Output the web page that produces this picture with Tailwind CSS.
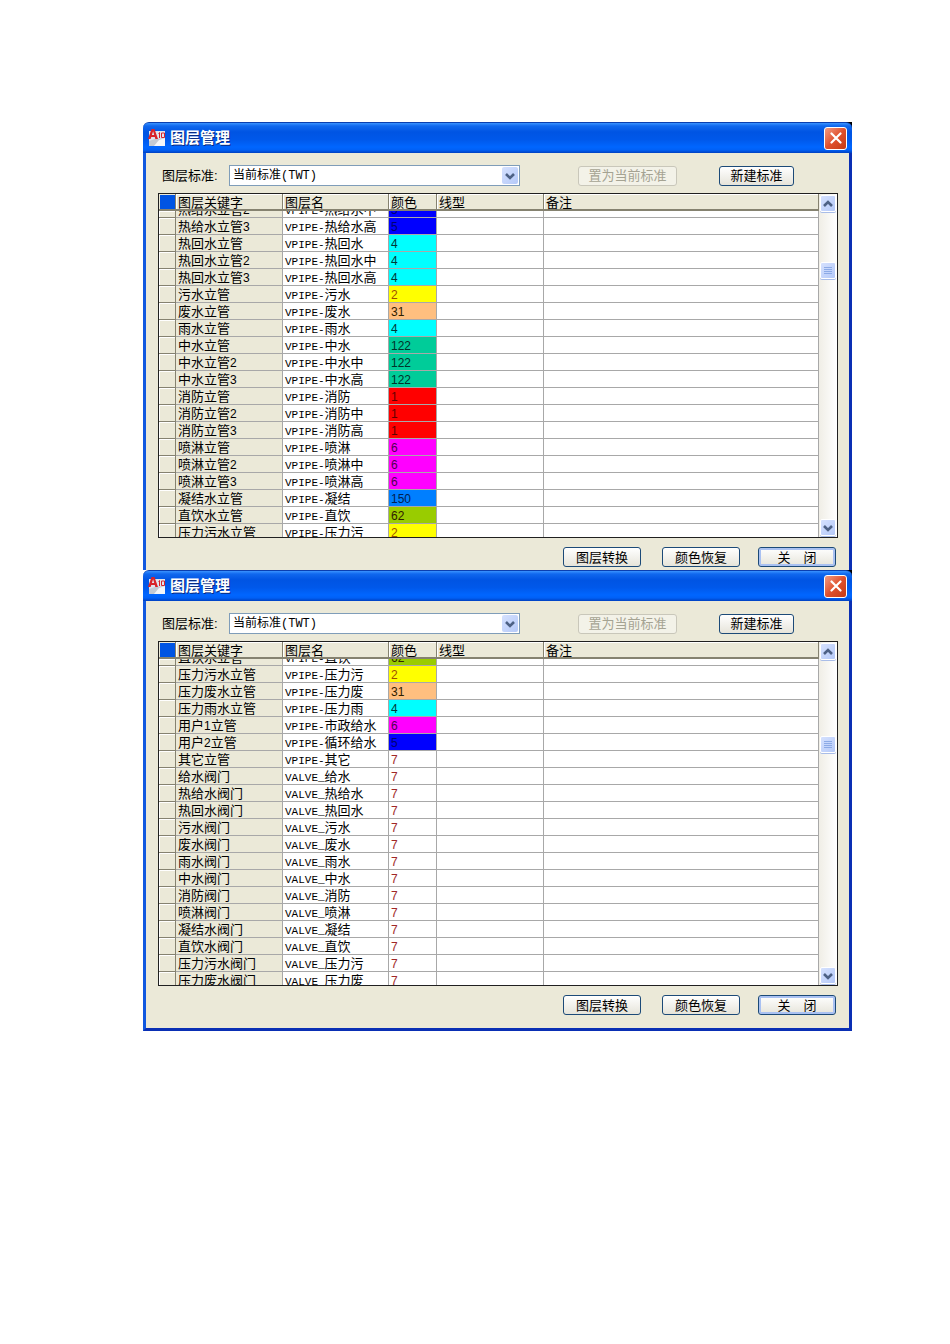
<!DOCTYPE html>
<html lang="zh-CN">
<head>
<meta charset="utf-8">
<title>图层管理</title>
<script src="https://cdn.jsdelivr.net/npm/@tailwindcss/browser@4"></script>
</head>
<body class="bg-white text-black text-[13px] font-['Liberation_Sans','Noto_Sans_CJK_SC',sans-serif]">
<main id="page" class="pt-[122px] pl-[143px] pr-[98px] pb-16"></main>
<script>
const COLORS = { 1: '#ff0000', 2: '#ffff00', 4: '#00ffff', 5: '#0000ff', 6: '#ff00ff', 7: '#ffffff', 31: '#ffbf7f', 62: '#99cc00', 122: '#00cc99', 150: '#007fff' };
const INK = { 2: '#a05000', 5: '#000070', 7: '#a02828', 1: '#600000', 6: '#500050', 122: '#00332a', 150: '#002050', 4: '#003838' };

const dialogs = [
  { id: 'a', thumb: 50, foot: 'pb-[3px]', frame: '', rows: [
    ['热给水立管2', 'VPIPE-热给水中', 5], ['热给水立管3', 'VPIPE-热给水高', 5], ['热回水立管', 'VPIPE-热回水', 4],
    ['热回水立管2', 'VPIPE-热回水中', 4], ['热回水立管3', 'VPIPE-热回水高', 4], ['污水立管', 'VPIPE-污水', 2],
    ['废水立管', 'VPIPE-废水', 31], ['雨水立管', 'VPIPE-雨水', 4], ['中水立管', 'VPIPE-中水', 122],
    ['中水立管2', 'VPIPE-中水中', 122], ['中水立管3', 'VPIPE-中水高', 122], ['消防立管', 'VPIPE-消防', 1],
    ['消防立管2', 'VPIPE-消防中', 1], ['消防立管3', 'VPIPE-消防高', 1], ['喷淋立管', 'VPIPE-喷淋', 6],
    ['喷淋立管2', 'VPIPE-喷淋中', 6], ['喷淋立管3', 'VPIPE-喷淋高', 6], ['凝结水立管', 'VPIPE-凝结', 150],
    ['直饮水立管', 'VPIPE-直饮', 62], ['压力污水立管', 'VPIPE-压力污', 2] ] },
  { id: 'b', thumb: 76, foot: 'pb-[13px]', frame: 'border-b-3 border-b-[#0a2fb4]', rows: [
    ['直饮水立管', 'VPIPE-直饮', 62], ['压力污水立管', 'VPIPE-压力污', 2], ['压力废水立管', 'VPIPE-压力废', 31],
    ['压力雨水立管', 'VPIPE-压力雨', 4], ['用户1立管', 'VPIPE-市政给水', 6], ['用户2立管', 'VPIPE-循环给水', 5],
    ['其它立管', 'VPIPE-其它', 7], ['给水阀门', 'VALVE_给水', 7], ['热给水阀门', 'VALVE_热给水', 7],
    ['热回水阀门', 'VALVE_热回水', 7], ['污水阀门', 'VALVE_污水', 7], ['废水阀门', 'VALVE_废水', 7],
    ['雨水阀门', 'VALVE_雨水', 7], ['中水阀门', 'VALVE_中水', 7], ['消防阀门', 'VALVE_消防', 7],
    ['喷淋阀门', 'VALVE_喷淋', 7], ['凝结水阀门', 'VALVE_凝结', 7], ['直饮水阀门', 'VALVE_直饮', 7],
    ['压力污水阀门', 'VALVE_压力污', 7], ['压力废水阀门', 'VALVE_压力废', 7] ] },
];

// Half-width characters are narrower than the ideographs around them.
const text = s => String(s).replace(/[\x21-\x7e]+/g, m => /^\d+$/.test(m)
  ? `<span class="text-[12px]">${m}</span>`
  : `<span class="font-['Liberation_Mono',monospace] text-[11px]">${m}</span>`);

const chevron = up => `<svg class="size-[10px]" viewBox="0 0 10 10" fill="none" stroke="#4d6185" stroke-width="2.6"><path d="${up ? 'M1 7l4-4 4 4' : 'M1 3l4 4 4-4'}"/></svg>`;

function row([key, name, color], i, all) {
  // The first row shows only its lower part, the last only its upper part.
  const box = i === 0 ? 'h-[6px] flex flex-col justify-end overflow-hidden' : i === all.length - 1 ? 'h-[13px] overflow-hidden' : 'h-[16px]';
  const line = i === all.length - 1 ? '' : 'border-b';
  const cell = s => `<div class="${box}"><div class="h-[16px] shrink-0 leading-[18px] pl-[2px] whitespace-nowrap">${text(s)}</div></div>`;
  return `<tr>
    <td class="${line} border-r border-[#858270] bg-[#ebe9d8] shadow-[inset_1px_1px_0_#ffffff]">${cell('')}</td>
    <th scope="row" class="${line} border-r border-[#a8a8a8] bg-[#ebe9d8] text-left font-normal">${cell(key)}</th>
    <td class="${line} border-r border-[#a8a8a8]">${cell(name)}</td>
    <td class="${line} border-r border-[#a8a8a8]" style="background:${COLORS[color]};color:${INK[color] || '#302000'}">${cell(color)}</td>
    <td class="${line} border-r border-[#a8a8a8]"></td>
    <td class="${line} border-r border-[#a8a8a8]"></td>
  </tr>`;
}

const head = s => `<th scope="col" class="h-[17px] border-r border-b-2 border-[#858270] bg-[#ebe9d8] p-0 text-left font-normal shadow-[inset_1px_1px_0_#ffffff]"><div class="h-[15px] pl-[2px] leading-[18px] whitespace-nowrap">${s}</div></th>`;
const push = s => `<button class="h-[20px] w-[78px] rounded-[3px] border border-[#1c4a78] bg-linear-to-b from-white to-[#e6e4da] leading-[15px] whitespace-pre">${s}</button>`;
const scrollBtn = (label, inner) => `<button aria-label="${label}" class="flex h-[17px] w-[16px] shrink-0 items-center justify-center rounded-[2px] border border-white bg-linear-to-br from-[#d5e1fe] to-[#b5c9f8] shadow-[0_1px_0_#a9bde8]">${inner}</button>`;

document.getElementById('page').innerHTML = dialogs.map(d => `
<section class="bg-[linear-gradient(to_left,black_10px,white_10px)]" aria-labelledby="title-${d.id}">
  <header class="flex h-[31px] items-center rounded-t-[6px] border-t border-[#0a3fb0] bg-[linear-gradient(to_bottom,#3a93ff_0,#1068ee_10%,#0054e3_30%,#0058ea_55%,#0066ff_80%,#0060f6_90%,#0040c0_100%)] pr-[5px] pl-[5px]">
    <svg class="h-[18px] w-[18px]" viewBox="0 0 18 18"><path d="M1 2h16v15H1z" fill="#dfe5ee"/><path d="M1 17V12l6-2 10-1v8z" fill="#c3cad4"/><path d="M6 17l5-6 6-2v8z" fill="#f4f6f9"/><path d="M0 10L3.500 0h3L10 10H7.300L6.800 8H3.300L2.600 10zM3.900 6h2.300L5.100 2.200z" fill="#d8232a"/><path d="M11.500 3.500V9M10.500 4.500l1-1M13.500 4h3v4.500h-3z" fill="none" stroke="#d8232a"/></svg>
    <h1 id="title-${d.id}" class="pl-1 text-[15px] leading-5 font-bold text-white [text-shadow:1px_1px_0_#0a2a80]">图层管理</h1>
    <button aria-label="关闭窗口" class="ml-auto flex size-[23px] items-center justify-center rounded-[3px] border border-white bg-linear-to-br from-[#f09a80] via-[#e0502c] to-[#c43a14]">
      <svg class="size-[12px]" viewBox="0 0 12 12" stroke="#fff" stroke-width="2.200" stroke-linecap="round"><path d="M1.500 1.500l9 9M10.500 1.500l-9 9"/></svg>
    </button>
  </header>
  <div class="border-l-3 border-r-3 border-l-[#1058e0] border-r-[#0a2fb4] bg-[#ebe9d8] pt-3 pr-[11px] pl-3 ${d.foot} ${d.frame}">
    <div class="flex h-[21px] items-center pl-1">
      <label for="std-${d.id}" class="w-[67px] whitespace-nowrap">图层标准:</label>
      <div class="relative h-[21px] w-[291px]">
        <select id="std-${d.id}" class="block h-full w-full appearance-none border border-[#7f9db9] bg-white pt-px pl-[3px] font-['Liberation_Mono','Noto_Sans_CJK_SC',monospace] text-[12px] leading-[18px]"><option>当前标准(TWT)</option></select>
        <span class="pointer-events-none absolute top-[2px] right-[2px] flex h-[17px] w-[16px] items-center justify-center rounded-[2px] bg-linear-to-br from-[#d5e1fe] to-[#b5c9f8]">${chevron(false)}</span>
      </div>
      <button disabled class="ml-[58px] h-[20px] w-[99px] rounded-[3px] border border-[#c9c7ba] bg-[#f3f2e8] leading-[15px] whitespace-nowrap text-[#a5a392]">置为当前标准</button>
      <button class="ml-[42px] h-[20px] w-[75px] rounded-[3px] border border-[#1c4a78] bg-linear-to-b from-white to-[#e6e4da] leading-[15px] whitespace-nowrap">新建标准</button>
    </div>
    <div class="mt-[7px] flex border border-[#202020] bg-white">
      <table class="min-w-0 flex-1 table-fixed border-separate border-spacing-0">
        <colgroup><col class="w-[17px]"><col class="w-[107px]"><col class="w-[106px]"><col class="w-[48px]"><col class="w-[107px]"><col></colgroup>
        <thead><tr><th class="border-r border-b-2 border-[#858270] bg-[#0054e3] p-0 shadow-[inset_1px_1px_0_#ebe9d8]"></th>${['图层关键字', '图层名', '颜色', '线型', '备注'].map(head).join('')}</tr></thead>
        <tbody>${d.rows.map(row).join('')}</tbody>
      </table>
      <div class="flex w-[18px] flex-col items-center bg-linear-to-r from-[#f0eee6] to-white py-px">
        ${scrollBtn('向上滚动', chevron(true))}
        <div class="w-[16px] flex-1" style="padding-top:${d.thumb}px">${scrollBtn('滚动滑块', '<svg class="size-[8px]" viewBox="0 0 8 8" stroke="#8caae6"><path d="M0 .5h8M0 2.500h8M0 4.500h8M0 6.500h8"/></svg>')}</div>
        ${scrollBtn('向下滚动', chevron(false))}
      </div>
    </div>
    <div class="mt-[9px] flex justify-end pr-[2px]">
      ${push('图层转换')}<span class="w-[21px]"></span>${push('颜色恢复')}<span class="w-[18px]"></span>
      <button class="h-[20px] w-[78px] rounded-[3px] border border-[#1c4a78] bg-linear-to-b from-white to-[#e6e4da] leading-[15px] whitespace-pre shadow-[inset_0_0_0_2px_#a9c1f2]">关&#12288;闭</button>
    </div>
  </div>
</section>`).join('');
</script>
</body>
</html>
